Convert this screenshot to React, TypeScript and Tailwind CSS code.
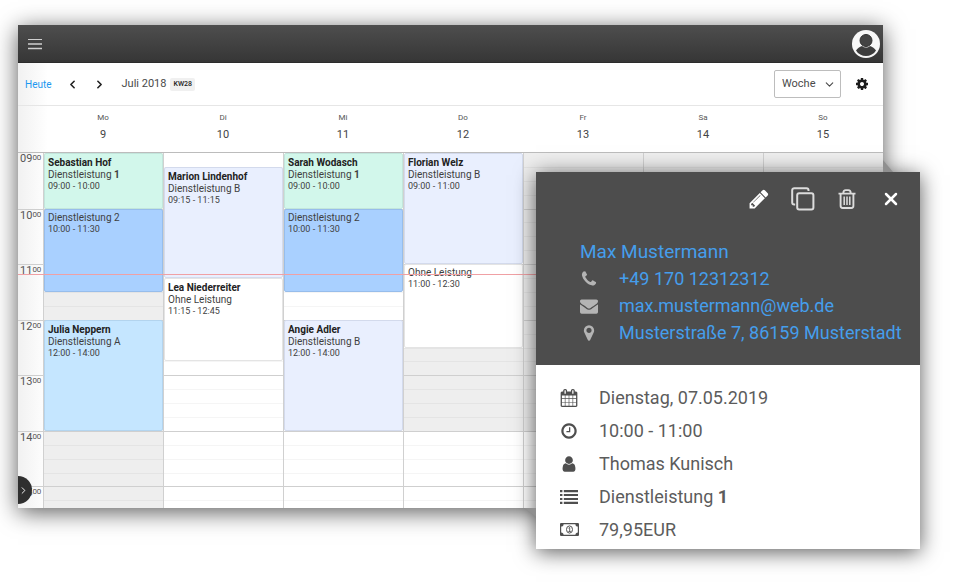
import type { ReactNode } from "react";
import { ChevronDown, ChevronLeft, ChevronRight, X } from "lucide-react";

type CalendarEvent = {
  start: number;
  end: number;
  name?: string;
  service: string;
  bold?: string;
  time: string;
  color: string;
};

type Day = {
  label: string;
  date: number;
  // closed from / to
  closed?: [number, number];
  events: CalendarEvent[];
};

const FIRST_HOUR = 9;
const hours = ["09", "10", "11", "12", "13", "14", "15"];
const quarters = Array.from({ length: 28 }, (_, i) => i);

const mint = "bg-[#d2f7eb] border-[#c2e6dc]";
const blue = "bg-[#a9d0ff] border-[#97bdeb]";
const sky = "bg-[#c5e6ff] border-[#b3d4ee]";
const lavender = "bg-[#e9effe] border-[#d3daec]";
const white = "bg-white border-[#e4e4e4]";

const days: Day[] = [
  {
    label: "Mo",
    date: 9,
    closed: [9, 16],
    events: [
      { start: 9, end: 10, name: "Sebastian Hof", service: "Dienstleistung", bold: "1", time: "09:00 - 10:00", color: mint },
      { start: 10, end: 11.5, service: "Dienstleistung 2", time: "10:00 - 11:30", color: blue },
      { start: 12, end: 14, name: "Julia Neppern", service: "Dienstleistung A", time: "12:00 - 14:00", color: sky },
    ],
  },
  {
    label: "Di",
    date: 10,
    events: [
      { start: 9.25, end: 11.25, name: "Marion Lindenhof", service: "Dienstleistung B", time: "09:15 - 11:15", color: lavender },
      { start: 11.25, end: 12.75, name: "Lea Niederreiter", service: "Ohne Leistung", time: "11:15 - 12:45", color: white },
    ],
  },
  {
    label: "Mi",
    date: 11,
    events: [
      { start: 9, end: 10, name: "Sarah Wodasch", service: "Dienstleistung", bold: "1", time: "09:00 - 10:00", color: mint },
      { start: 10, end: 11.5, service: "Dienstleistung 2", time: "10:00 - 11:30", color: blue },
      { start: 12, end: 14, name: "Angie Adler", service: "Dienstleistung B", time: "12:00 - 14:00", color: lavender },
    ],
  },
  {
    label: "Do",
    date: 12,
    closed: [12.5, 14],
    events: [
      { start: 9, end: 11, name: "Florian Welz", service: "Dienstleistung B", time: "09:00 - 11:00", color: lavender },
      { start: 11, end: 12.5, service: "Ohne Leistung", time: "11:00 - 12:30", color: white },
    ],
  },
  { label: "Fr", date: 13, closed: [9, 14], events: [] },
  { label: "Sa", date: 14, closed: [9, 16], events: [] },
  { label: "So", date: 15, closed: [9, 16], events: [] },
];

const rows = (start: number, end: number) => ({
  gridRow: `${(start - FIRST_HOUR) * 4 + 1} / ${(end - FIRST_HOUR) * 4 + 1}`,
});

const Glyph = ({ d, size = 18 }: { d: string; size?: number }) => (
  <svg width={size} height={size} viewBox="0 0 1792 1792" fill="currentColor" aria-hidden="true">
    <path d={d} />
  </svg>
);

const cog =
  "M1152 896q0-106-75-181t-181-75-181 75-75 181 75 181 181 75 181-75 75-181zm512-109v222q0 12-8 23t-20 13l-185 28q-19 54-39 91 35 50 107 138 10 12 10 25t-9 23q-27 37-99 108t-94 71q-12 0-26-9l-138-108q-44 23-91 38-16 136-29 186-7 28-36 28h-222q-14 0-24.5-8.5t-11.5-21.5l-28-184q-49-16-90-37l-141 107q-10 9-25 9-14 0-25-11-126-114-165-168-7-10-7-23 0-12 8-23 15-21 51-66.5t54-70.5q-27-50-41-99l-183-27q-13-2-21-12.5t-8-23.5v-222q0-12 8-23t19-13l186-28q14-46 39-92-40-57-107-138-10-12-10-24 0-10 9-23 26-36 98.5-107.5t94.5-71.5q13 0 26 10l138 107q44-23 91-38 16-136 29-186 7-28 36-28h222q14 0 24.5 8.5t11.5 21.5l28 184q49 16 90 37l142-107q9-9 24-9 13 0 25 10 129 119 165 170 7 8 7 22 0 12-8 23-15 21-51 66.5t-54 70.5q26 50 41 98l183 28q13 2 21 12.5t8 23.5z";
const pencil =
  "M491 1536l91-91-235-235-91 91v107h128v128h107zm523-928q0-22-22-22-10 0-17 7l-542 542q-7 7-7 17 0 22 22 22 10 0 17-7l542-542q7-7 7-17zm-54-192l416 416-832 832h-416v-416zm683 96q0 53-37 90l-166 166-416-416 166-165q36-38 90-38 53 0 91 38l235 234q37 39 37 91z";
const phone =
  "M1600 1240q0 27-10 70.5t-21 68.5q-21 50-122 106-94 51-186 51-27 0-53-3.5t-57.5-12.5-47-14.5-55.5-20.5-49-18q-98-35-175-83-127-79-264-216t-216-264q-48-77-83-175-3-9-18-49t-20.5-55.5-14.5-47-12.5-57.5-3.5-53q0-92 51-186 56-101 106-122 25-11 68.5-21t70.5-10q14 0 21 3 18 6 53 76 11 19 30 54t35 63.5 31 53.5q3 4 17.5 25t21.5 35.5 7 28.5q0 20-28.5 50t-62 55-62 53-28.5 46q0 9 5 22.5t8.5 20.5 14 24 11.5 19q76 137 174 235t235 174q2 1 19 11.5t24 14 20.5 8.5 22.5 5q18 0 46-28.5t53-62 55-62 50-28.5q14 0 28.5 7t35.5 21.5 25 17.5q25 15 53.5 31t63.5 35 54 30q70 35 76 53 3 7 3 21z";
const envelope =
  "M1792 710v794q0 66-47 113t-113 47h-1472q-66 0-113-47t-47-113v-794q44 49 101 87 362 246 497 345 57 42 92.5 65.5t94.5 48 110 24.5h2q51 0 110-24.5t94.5-48 92.5-65.5q170-123 498-345 57-39 100-87zm0-294q0 79-49 151t-122 123q-376 261-468 325-10 7-42.5 31t-54 38.5-52 32.5-57.5 27-50 9h-2q-23 0-50-9t-57.5-27-52-32.5-54-38.5-42.5-31q-91-64-262-182.5t-205-142.5q-62-42-117-115.5t-55-136.5q0-78 41.5-130t118.5-52h1472q65 0 112.5 47t47.500 113z";
const marker =
  "M1152 640q0-106-75-181t-181-75-181 75-75 181 75 181 181 75 181-75 75-181zm256 0q0 109-33 179l-364 774q-16 33-47.5 52t-67.5 19-67.5-19-46.5-52l-365-774q-33-70-33-179 0-212 150-362t362-150 362 150 150 362z";
const calendar =
  "M192 1664h288v-288h-288v288zm352 0h320v-288h-320v288zm-352-352h288v-320h-288v320zm352 0h320v-320h-320v320zm-352-384h288v-288h-288v288zm736 736h320v-288h-320v288zm-384-736h320v-288h-320v288zm768 736h288v-288h-288v288zm-384-352h320v-320h-320v320zm-352-864v-288q0-13-9.5-22.5t-22.5-9.5h-64q-13 0-22.5 9.5t-9.5 22.5v288q0 13 9.5 22.5t22.5 9.5h64q13 0 22.5-9.5t9.5-22.5zm736 864h288v-320h-288v320zm-384-384h320v-288h-320v288zm384 0h288v-288h-288v288zm32-480v-288q0-13-9.5-22.5t-22.5-9.5h-64q-13 0-22.5 9.5t-9.5 22.5v288q0 13 9.5 22.5t22.5 9.5h64q13 0 22.5-9.5t9.5-22.5zm384-64v1280q0 52-38 90t-90 38h-1408q-52 0-90-38t-38-90v-1280q0-52 38-90t90-38h128v-96q0-66 47-113t113-47h64q66 0 113 47t47 113v96h384v-96q0-66 47-113t113-47h64q66 0 113 47t47 113v96h128q52 0 90 38t38 90z";
const clock =
  "M1024 544v448q0 14-9 23t-23 9h-320q-14 0-23-9t-9-23v-64q0-14 9-23t23-9h224v-352q0-14 9-23t23-9h64q14 0 23 9t9 23zm416 352q0-148-73-273t-198-198-273-73-273 73-198 198-73 273 73 273 198 198 273 73 273-73 198-198 73-273zm224 0q0 209-103 385.5t-279.5 279.5-385.5 103-385.5-103-279.5-279.5-103-385.5 103-385.5 279.5-279.5 385.5-103 385.5 103 279.5 279.5 103 385.5z";
const user =
  "M1536 1399q0 109-62.5 187t-150.5 78h-854q-88 0-150.5-78t-62.5-187q0-85 8.5-160.5t31.5-152 58.5-131 94-89 134.5-34.5q131 128 313 128t313-128q76 0 134.5 34.5t94 89 58.5 131 31.5 152 8.5 160.5zm-256-887q0 159-112.5 271.5t-271.5 112.5-271.5-112.5-112.5-271.5 112.5-271.5 271.5-112.5 271.5 112.5 112.5 271.5z";

const MenuIcon = () => (
  <svg width="14" height="12" viewBox="0 0 14 12" stroke="currentColor" aria-hidden="true">
    <path d="M0 1.5h14" strokeWidth="1" />
    <path d="M0 6h14M0 10.5h14" strokeWidth="1.6" />
  </svg>
);

const AvatarIcon = () => (
  <svg width="28" height="28" viewBox="0 0 28 28" aria-hidden="true">
    <circle cx="14" cy="14" r="14" fill="#f7f7f7" />
    <circle cx="14" cy="10.5" r="6" fill="#434343" stroke="#303030" strokeWidth="1" />
    <path
      d="M4 20.5c1.500-2.200 3.500-3.700 6-4.500 2.500 2 5.500 2 8 0 2.500.8 4.500 2.300 6 4.500-2.200 3.600-6 5.500-10 5.500s-7.800-1.900-10-5.500z"
      fill="#3d3d3d"
    />
  </svg>
);

const CopyIcon = () => (
  <svg width="24" height="24" viewBox="0 0 24 24" fill="none" stroke="currentColor" strokeWidth="2" aria-hidden="true">
    <rect x="6.200" y="6.200" width="16.200" height="16.200" rx="2" />
    <path d="M4.200 17.500H3.200a2 2 0 0 1-2-2V3.200a2 2 0 0 1 2-2h12.300a2 2 0 0 1 2 2v.8" />
  </svg>
);

const TrashIcon = () => (
  <svg width="18" height="20" viewBox="0 0 18 20" fill="none" stroke="currentColor" strokeWidth="1.900" aria-hidden="true">
    <path d="M.500 4.600h17M5.300 4.300c0-2 1-3.200 2.400-3.200h2.600c1.400 0 2.400 1.200 2.400 3.200" />
    <path d="M2.600 4.800v12c0 1.400.8 2.200 2 2.200h8.800c1.200 0 2-.8 2-2.200v-12" />
    <path d="M6.200 7.500v8.500M9 7.500v8.500M11.800 7.500v8.500" strokeWidth="1.500" />
  </svg>
);

const ListIcon = () => (
  <svg width="18" height="14" viewBox="0 0 18 14" fill="currentColor" aria-hidden="true">
    <path d="M0 0h2.400v2.200H0zM0 3.900h2.400v2.200H0zM0 7.900h2.400v2.200H0zM0 11.800h2.400V14H0z" />
    <path d="M3.800 0H18v2.200H3.800zM3.800 3.900H18v2.200H3.800zM3.800 7.900H18v2.200H3.800zM3.800 11.800H18V14H3.800z" />
  </svg>
);

const MoneyIcon = () => (
  <svg width="19" height="13" viewBox="0 0 19 13" fill="none" stroke="currentColor" aria-hidden="true">
    <rect x=".6" y=".6" width="17.800" height="11.800" rx=".5" strokeWidth="1.200" />
    <path d="M1 1h2.600A2.600 2.600 0 0 1 1 3.600zM18 1h-2.600A2.600 2.600 0 0 0 18 3.600zM1 12h2.600A2.600 2.600 0 0 0 1 9.400zM18 12h-2.600A2.600 2.600 0 0 1 18 9.400z" fill="currentColor" stroke="none" />
    <ellipse cx="9.500" cy="6.500" rx="3" ry="3.600" strokeWidth="1" />
    <path d="M8.500 5.200l1.200-.8v4M8.400 8.500h2.400" strokeWidth=".9" />
  </svg>
);

const TopBar = () => (
  <header className="flex h-[38px] shrink-0 items-center justify-between border-b border-[#2c2c2c] bg-linear-to-b from-[#4e4e4e] to-[#363636] pl-[10px] pr-[3px]">
    <button aria-label="Menü" className="text-[#d0d0d0]">
      <MenuIcon />
    </button>
    <button aria-label="Profil">
      <AvatarIcon />
    </button>
  </header>
);

const Toolbar = () => (
  <div className="flex h-[43px] shrink-0 items-center justify-between border-b border-[#e6e6e6] pl-[7px] pr-[14px] text-[#4a4a4a]">
    <div className="flex items-center">
      <button className="text-[10px] text-[#1b98f0]">Heute</button>
      <button aria-label="Vorherige Woche" className="ml-[14px] text-[#222]">
        <ChevronLeft size={13} strokeWidth={3} />
      </button>
      <button aria-label="Nächste Woche" className="ml-[14px] text-[#222]">
        <ChevronRight size={13} strokeWidth={3} />
      </button>
      <h1 className="ml-4 text-[11px]">Juli 2018</h1>
      <span className="ml-1 rounded-xs bg-[#f0f0f0] px-[3px] text-[7px] leading-[13px] font-medium text-[#222]">KW28</span>
    </div>
    <div className="flex items-center gap-[14px]">
      <div className="relative">
        <select
          aria-label="Ansicht"
          className="h-7 w-[67px] appearance-none rounded-xs border border-[#bdbdbd] bg-white pl-[7px] text-[11px]"
        >
          <option>Woche</option>
        </select>
        <ChevronDown size={13} strokeWidth={2} className="pointer-events-none absolute top-2 right-[5px]" />
      </div>
      <button aria-label="Einstellungen" className="text-[#1c1c1c]">
        <Glyph d={cog} size={14} />
      </button>
    </div>
  </div>
);

const DayHeader = () => (
  <div className="flex h-[47px] shrink-0 border-b border-[#bcbcbc] pl-[25px]">
    <div className="grid flex-1 grid-cols-7 text-center text-[#555]">
      {days.map((day) => (
        <div key={day.label} className="pt-[7px]">
          <p className="text-[8px] leading-[10px]">{day.label}</p>
          <p className="mt-1 text-[11px] leading-[16px] text-[#444]">{day.date}</p>
        </div>
      ))}
    </div>
  </div>
);

const EventCard = ({ event }: { event: CalendarEvent }) => (
  <article
    style={rows(event.start, event.end)}
    className={`z-10 col-start-1 overflow-hidden rounded-[2px] border px-[3px] pt-[2px] text-[#3f3f3f] ${event.color}`}
  >
    {event.name && <h2 className="text-[10px] leading-[13px] font-bold text-[#222]">{event.name}</h2>}
    <p className="text-[10px] leading-[12px]">
      {event.service} {event.bold && <b>{event.bold}</b>}
    </p>
    <p className="text-[9px] leading-[10px]">{event.time}</p>
  </article>
);

const DayColumn = ({ day }: { day: Day }) => (
  <div className="grid grid-cols-1 grid-rows-[repeat(28,minmax(0,1fr))] border-l border-[#d0d0d0]">
    {day.closed && <div style={rows(day.closed[0], day.closed[1])} className="col-start-1 bg-[#eeeeee]" />}
    {quarters.map((q) => (
      <div
        key={q}
        style={{ gridRow: q + 1 }}
        className={`col-start-1 ${q === 0 ? "" : q % 4 === 0 ? "border-t border-[#cfcfcf]" : "border-t border-black/4"}`}
      />
    ))}
    {day.events.map((event) => (
      <EventCard key={event.time} event={event} />
    ))}
  </div>
);

const WeekGrid = () => (
  <div className="relative min-h-0 flex-1 overflow-hidden">
    <div className="flex h-[389px]">
      <div className="grid w-[25px] grid-rows-7 text-[#555]">
        {hours.map((hour, i) => (
          <div key={hour} className={`flex pl-[2px] text-[11px] leading-[12px] ${i === 0 ? "" : "border-t border-[#cfcfcf]"}`}>
            {hour}
            <span className="text-[8px] leading-[9px]">00</span>
          </div>
        ))}
      </div>
      <div className="grid flex-1 grid-cols-7">
        {days.map((day) => (
          <DayColumn key={day.label} day={day} />
        ))}
      </div>
    </div>
    {/* current time */}
    <div className="absolute inset-x-0 top-[121px] z-20 h-px bg-[#f0a0a4]" />
    <button
      aria-label="Seitenleiste öffnen"
      className="absolute bottom-1 left-0 z-20 flex h-7 w-[14px] items-center rounded-r-full bg-[#2f2f2f] text-white"
    >
      <ChevronRight size={11} strokeWidth={2} />
    </button>
  </div>
);

const ContactRow = ({ icon, href, children }: { icon: ReactNode; href: string; children: ReactNode }) => (
  <li className="flex items-center">
    <span className="flex w-[18px] justify-center text-[#b4b4b4]">{icon}</span>
    <a href={href} className="ml-[21px] leading-[27px] whitespace-nowrap">
      {children}
    </a>
  </li>
);

const DetailRow = ({ icon, children }: { icon: ReactNode; children: ReactNode }) => (
  <li className="flex items-center">
    <span className="flex w-5 justify-center text-[#4f4f4f]">{icon}</span>
    <span className="ml-5 leading-[33px]">{children}</span>
  </li>
);

const DetailCard = () => (
  <aside className="absolute top-[172px] right-10 z-30 w-[384px] bg-white text-[18px] text-[#5c5c5c] shadow-[0_3px_20px_rgba(0,0,0,0.65)]">
    {/* wedges that tie the card to the calendar behind it */}
    <svg className="absolute -top-3 right-[27px] text-[#8f8f8f]" width="10" height="12" fill="currentColor" aria-hidden="true">
      <path d="M0 0l10 12H0z" />
    </svg>
    <svg className="absolute top-[336px] -left-3 text-[#8f8f8f]" width="12" height="9" fill="currentColor" aria-hidden="true">
      <path d="M0 0h12v9z" />
    </svg>
    <div className="bg-[#4d4d4d] px-[7px] pb-[19px] text-[#459eec]">
      <div className="flex h-[54px] items-center justify-end text-[#dcdcdc]">
        <button aria-label="Bearbeiten" className="flex w-11 justify-center text-white">
          <Glyph d={pencil} size={22} />
        </button>
        <button aria-label="Kopieren" className="flex w-11 justify-center">
          <CopyIcon />
        </button>
        <button aria-label="Löschen" className="flex w-11 justify-center">
          <TrashIcon />
        </button>
        <button aria-label="Schließen" className="flex w-11 justify-center text-white">
          <X size={20} strokeWidth={3} />
        </button>
      </div>
      <div className="pt-[13px] pl-[37px]">
        <h2 className="text-[19px] leading-[26px]">Max Mustermann</h2>
        <ul className="flex flex-col">
          <ContactRow icon={<Glyph d={phone} size={18} />} href="tel:+4917012312312">
            +49 170 12312312
          </ContactRow>
          <ContactRow icon={<Glyph d={envelope} size={18} />} href="mailto:max.mustermann@web.de">
            max.mustermann@web.de
          </ContactRow>
          <ContactRow icon={<Glyph d={marker} size={18} />} href="#karte">
            Musterstraße 7, 86159 Musterstadt
          </ContactRow>
        </ul>
      </div>
    </div>
    <ul className="px-[23px] pt-4 pb-[3px]">
      <DetailRow icon={<Glyph d={calendar} size={18} />}>Dienstag, 07.05.2019</DetailRow>
      <DetailRow icon={<Glyph d={clock} size={18} />}>10:00 - 11:00</DetailRow>
      <DetailRow icon={<Glyph d={user} size={18} />}>Thomas Kunisch</DetailRow>
      <DetailRow icon={<ListIcon />}>
        Dienstleistung <b>1</b>
      </DetailRow>
      <DetailRow icon={<MoneyIcon />}>79,95EUR</DetailRow>
    </ul>
  </aside>
);

const App = () => {
  return (
    <main className="relative flex h-screen flex-col overflow-hidden bg-white pt-[25px] pr-[77px] pb-[76px] pl-[18px] font-[Roboto,sans-serif]">
      <section className="flex min-h-0 flex-1 flex-col bg-linear-to-r from-[#f1f1f1] to-white to-[30px] shadow-[0_4px_22px_rgba(0,0,0,0.65)]">
        <TopBar />
        <Toolbar />
        <DayHeader />
        <WeekGrid />
      </section>
      <DetailCard />
    </main>
  );
};

export default App;
